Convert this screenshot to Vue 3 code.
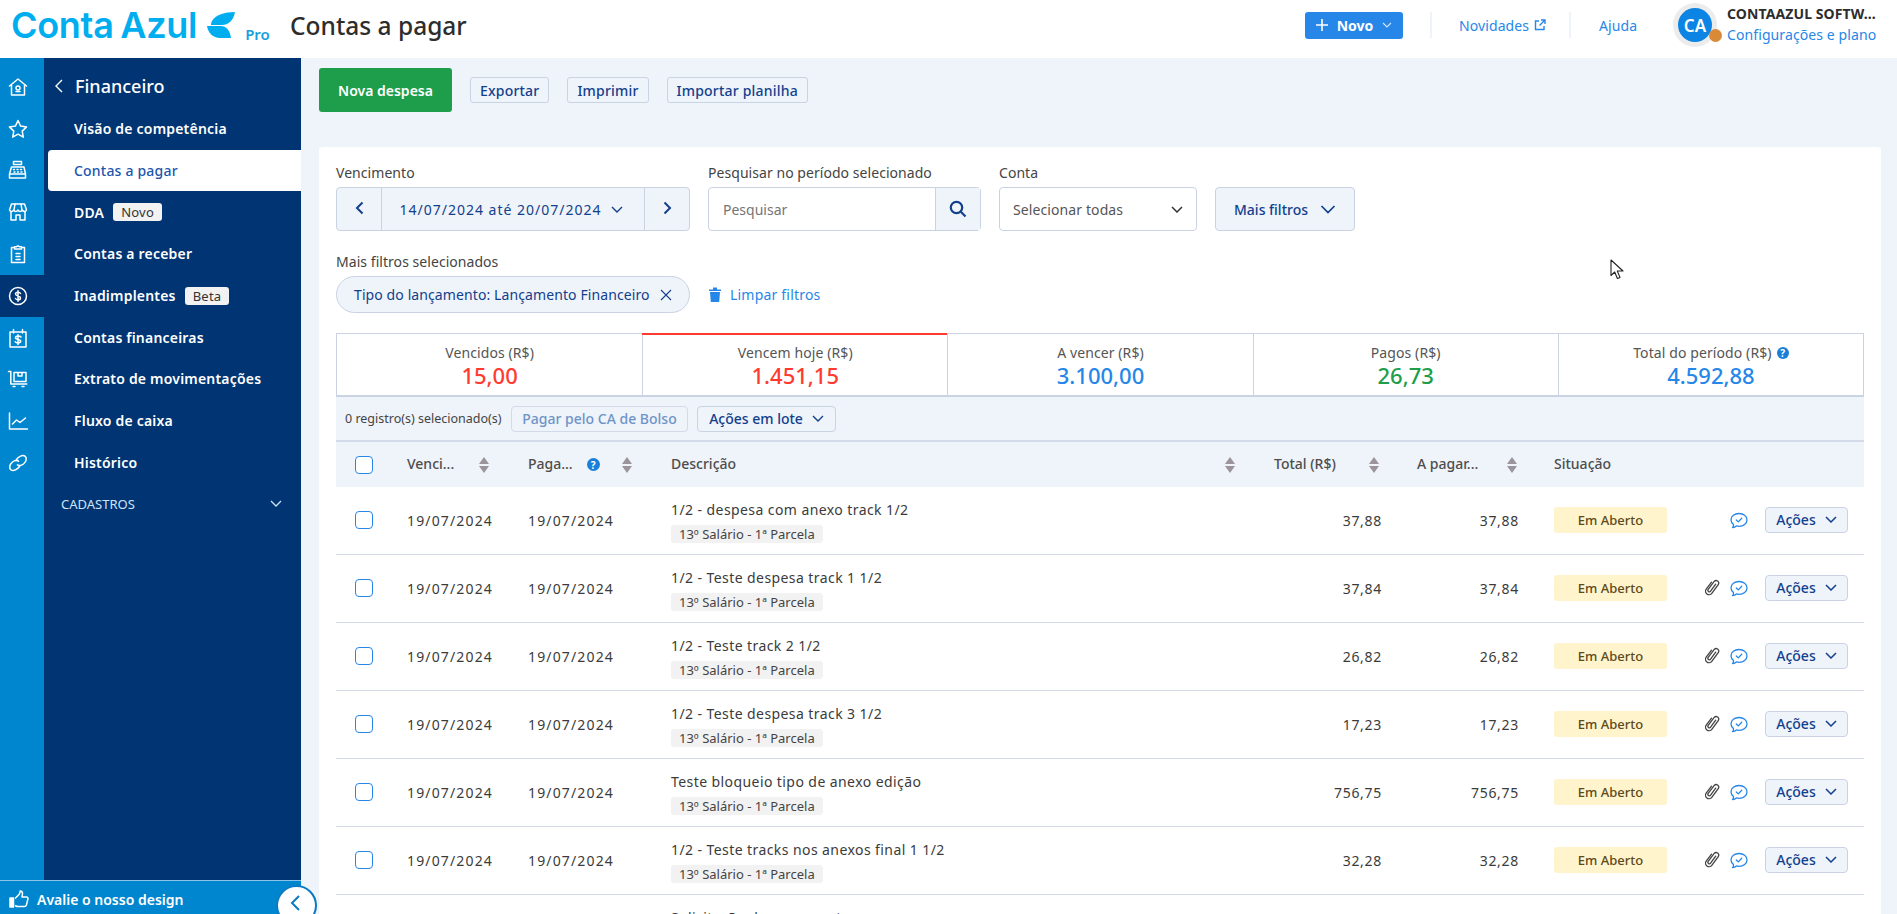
<script setup>
const navItems = [
  { label: 'Visão de competência' },
  { label: 'Contas a pagar', active: true },
  { label: 'DDA', badge: 'Novo' },
  { label: 'Contas a receber' },
  { label: 'Inadimplentes', badge: 'Beta' },
  { label: 'Contas financeiras' },
  { label: 'Extrato de movimentações' },
  { label: 'Fluxo de caixa' },
  { label: 'Histórico' }
]

const railIcons = ['home', 'star', 'register', 'store', 'clipboard', 'dollar', 'calendar', 'cart', 'chart', 'link']

const totals = [
  { label: 'Vencidos (R$)', value: '15,00', color: 'red' },
  { label: 'Vencem hoje (R$)', value: '1.451,15', color: 'red', current: true },
  { label: 'A vencer (R$)', value: '3.100,00', color: 'blue' },
  { label: 'Pagos (R$)', value: '26,73', color: 'green' },
  { label: 'Total do período (R$)', value: '4.592,88', color: 'blue', help: true }
]

const rows = [
  { title: '1/2 - despesa com anexo track 1/2', value: '37,88', noClip: true },
  { title: '1/2 - Teste despesa track 1 1/2', value: '37,84' },
  { title: '1/2 - Teste track 2 1/2', value: '26,82' },
  { title: '1/2 - Teste despesa track 3 1/2', value: '17,23' },
  { title: 'Teste bloqueio tipo de anexo edição', value: '756,75' },
  { title: '1/2 - Teste tracks nos anexos final 1 1/2', value: '32,28' },
  { title: 'Solicitação de pagamento', value: '120,00' }
]
</script>

<template>
  <div class="page">
    <header class="topbar">
      <div class="logo">
        <span class="logo-text">Conta Azul</span>
        <svg class="logo-mark" viewBox="0 0 30 26" width="30" height="26">
          <path d="M29 0C19 0 9 3 6 9c-1 2-1 3-1 4h11C23 13 28 7 29 0z" fill="#00aeef" />
          <path d="M1 14h14c5 0 9 4 10 12H14C7 26 2 21 1 14z" fill="#00aeef" />
        </svg>
        <span class="logo-pro">Pro</span>
      </div>
      <h1 class="page-title">Contas a pagar</h1>
      <div class="topbar-right">
        <button class="btn-new">
          <svg width="12" height="12" viewBox="0 0 12 12"><path d="M6 0v12M0 6h12" stroke="#fff" stroke-width="1.6" /></svg>
          <span>Novo</span>
          <svg width="10" height="6" viewBox="0 0 10 6"><path d="M1 1l4 4 4-4" fill="none" stroke="#cfe4fb" stroke-width="1.2" /></svg>
        </button>
        <a class="top-link news">
          Novidades
          <svg width="12" height="12" viewBox="0 0 12 12"><path d="M5 2H1.500v8.500H10V7M7 1h4v4M11 1L5.500 6.500" fill="none" stroke="#2687e9" stroke-width="1.400" /></svg>
        </a>
        <a class="top-link help">Ajuda</a>
        <div class="avatar">
          <div class="avatar-inner">CA</div>
          <span class="avatar-dot"></span>
        </div>
        <div class="account">
          <div class="account-name">CONTAAZUL SOFTW...</div>
          <div class="account-link">Configurações e plano</div>
        </div>
      </div>
    </header>

    <div class="body">
      <aside class="sidebar">
        <div class="sidebar-main">
          <nav class="rail">
            <div v-for="icon in railIcons" :key="icon" class="rail-item" :class="{ active: icon === 'dollar' }">
              <svg width="22" height="22" viewBox="0 0 22 22" fill="none" stroke="#fff" stroke-width="1.500" stroke-linejoin="round" stroke-linecap="round">
                <template v-if="icon === 'home'">
                  <path d="M2.500 10L11 3l8.500 7M4.500 9v10h13V9" />
                  <circle cx="11" cy="12" r="2" />
                  <path d="M9 15.500h4" />
                </template>
                <path v-else-if="icon === 'star'" d="M11 2.500l2.600 5.600 6 .8-4.400 4.200 1.100 6.100L11 16.200l-5.300 3 1.100-6.100-4.400-4.200 6-.8z" />
                <template v-else-if="icon === 'register'">
                  <path d="M6.500 2.500h8v3h-8zM4.500 8h12.500l1.500 7H2.500zM2.500 15h16v4h-16z" />
                  <path d="M6.500 10.500h1M10 10.500h1M13.500 10.500h1M7 13h1M10.500 13h1M14 13h1" />
                </template>
                <template v-else-if="icon === 'store'">
                  <path d="M4.500 3h13l2 6c-1 2-3 2-4.300 0-1 2-3.400 2-4.200 0-1 2-3.400 2-4.300 0-1 2-3.400 2-4.200 0z" />
                  <path d="M4 11v8h5v-5h4v5h5v-8M8 3L7 9M14 3l1 6" />
                </template>
                <template v-else-if="icon === 'clipboard'">
                  <path d="M7.500 4.500H4.500v15h13v-15h-3M7.500 6V3.800h2.200a1.400 1.400 0 0 1 2.600 0h2.200V6z" />
                  <path d="M9 10.500h4M9 13.500h4M9 16.500h4" />
                </template>
                <template v-else-if="icon === 'dollar'">
                  <circle cx="11" cy="11" r="8.500" />
                  <path d="M13.500 8.500c-.5-1-1.500-1.300-2.500-1.300-1.500 0-2.500.8-2.500 1.900 0 2.600 5 1.200 5 3.800 0 1.100-1 1.900-2.500 1.900-1.100 0-2-.4-2.500-1.300M11 5.800v10.400" />
                </template>
                <template v-else-if="icon === 'calendar'">
                  <path d="M3 5h16v15H3zM6.500 2.500V6M15.500 2.500V6" />
                  <path d="M14 10c-.5-.8-1.500-1.100-3-1.100-1.400 0-2.500.7-2.500 1.800 0 2.400 5.200 1 5.200 3.400 0 1.100-1.100 1.800-2.700 1.800-1.200 0-2.300-.4-2.800-1.200M11 7.800v9.700" />
                </template>
                <template v-else-if="icon === 'cart'">
                  <path d="M1.500 3.500h2.300v12.500h16" />
                  <path d="M7 4.500h12v9H7zM11 4.500v3.500h4V4.500" />
                  <path d="M6 18.500h2M15 18.500h2" />
                </template>
                <template v-else-if="icon === 'chart'">
                  <path d="M2.500 3v16h18" />
                  <path d="M5.500 14l4-4 3.500 2.500 5.500-4.500" />
                </template>
                <template v-else>
                  <path d="M9.500 7.500c2-3 6-5 8.500-3.300 2.300 1.700 1.300 5.600-1.500 7.800-2 1.600-4.500 2-6 .8" />
                  <path d="M12.500 14.500c-2 3-6 5-8.500 3.300-2.300-1.700-1.300-5.600 1.500-7.800 2-1.600 4.500-2 6-.8" />
                </template>
              </svg>
            </div>
          </nav>
          <div class="menu">
            <div class="menu-title">
              <svg width="8" height="14" viewBox="0 0 8 14"><path d="M7 1L1 7l6 6" fill="none" stroke="#fff" stroke-width="1.400" /></svg>
              <span>Financeiro</span>
            </div>
            <a v-for="item in navItems" :key="item.label" class="menu-item" :class="{ active: item.active }">
              {{ item.label }}
              <span v-if="item.badge" class="menu-badge">{{ item.badge }}</span>
            </a>
            <div class="menu-section">
              <span>CADASTROS</span>
              <svg width="12" height="7" viewBox="0 0 12 7"><path d="M1 1l5 5 5-5" fill="none" stroke="#cfe4fb" stroke-width="1.300" /></svg>
            </div>
          </div>
        </div>
        <div class="sidebar-footer">
          <svg width="20" height="18" viewBox="0 0 20 18" fill="none" stroke="#fff" stroke-width="1.500" stroke-linejoin="round">
            <path d="M1 8h3.500v9H1z" fill="#fff" />
            <path d="M6 8.500l4-4c1-1.200 1-2.500 1.200-3.500 1.800 0 2.600 1.500 2.200 3.500L13 7h4.500c1.200 0 1.700 1 1.400 2l-1.500 6c-.3 1-1 1.500-2 1.500H9c-1.300 0-2-.5-3-1" />
          </svg>
          <span>Avalie o nosso design</span>
        </div>
        <button class="collapse">
          <svg width="12" height="18" viewBox="0 0 12 18"><path d="M10 2L3 9l7 7" fill="none" stroke="#0a7ac4" stroke-width="2" /></svg>
        </button>
      </aside>

      <main class="content">
        <div class="actions">
          <button class="btn-primary">Nova despesa</button>
          <button class="btn-light">Exportar</button>
          <button class="btn-light">Imprimir</button>
          <button class="btn-light">Importar planilha</button>
        </div>

        <section class="card">
          <div class="filters">
            <div class="field">
              <label>Vencimento</label>
              <div class="date-range">
                <button class="date-arrow">
                  <svg width="9" height="14" viewBox="0 0 9 14"><path d="M7.500 1.500L2 7l5.500 5.500" fill="none" stroke="#12408c" stroke-width="2" /></svg>
                </button>
                <div class="date-value">
                  14/07/2024 até 20/07/2024
                  <svg width="12" height="7" viewBox="0 0 12 7"><path d="M1 1l5 5 5-5" fill="none" stroke="#12408c" stroke-width="1.400" /></svg>
                </div>
                <button class="date-arrow">
                  <svg width="9" height="14" viewBox="0 0 9 14"><path d="M1.500 1.500L7 7l-5.500 5.500" fill="none" stroke="#12408c" stroke-width="2" /></svg>
                </button>
              </div>
            </div>
            <div class="field">
              <label>Pesquisar no período selecionado</label>
              <div class="search">
                <span class="search-text">Pesquisar</span>
                <button class="search-btn">
                  <svg width="18" height="18" viewBox="0 0 18 18" fill="none" stroke="#12408c" stroke-width="2.200"><circle cx="7.500" cy="7.500" r="5.700" /><path d="M11.800 11.800L16.500 16.500" /></svg>
                </button>
              </div>
            </div>
            <div class="field">
              <label>Conta</label>
              <div class="select">
                <span>Selecionar todas</span>
                <svg width="12" height="7" viewBox="0 0 12 7"><path d="M1 1l5 5 5-5" fill="none" stroke="#333" stroke-width="1.500" /></svg>
              </div>
            </div>
            <button class="btn-more">
              Mais filtros
              <svg width="16" height="9" viewBox="0 0 16 9"><path d="M1.500 1l6.500 6.500L14.500 1" fill="none" stroke="#12408c" stroke-width="1.700" /></svg>
            </button>
          </div>

          <div class="selected-filters">
            <label>Mais filtros selecionados</label>
            <div class="chip-line">
              <div class="chip">
                <span>Tipo do lançamento: Lançamento Financeiro</span>
                <svg width="12" height="12" viewBox="0 0 12 12"><path d="M1 1l10 10M11 1L1 11" stroke="#12408c" stroke-width="1.100" /></svg>
              </div>
              <a class="clear">
                <svg width="12" height="15" viewBox="0 0 12 15"><path d="M0 2.500h12v1.500H0zM4 .5h4v2H4zM1 5h10l-.8 10H1.800z" fill="#2687e9" /></svg>
                Limpar filtros
              </a>
            </div>
          </div>

          <div class="totals">
            <div v-for="t in totals" :key="t.label" class="total" :class="{ current: t.current }">
              <div class="total-label">
                {{ t.label }}
                <span v-if="t.help" class="help-dot">?</span>
              </div>
              <div class="total-value" :class="t.color">{{ t.value }}</div>
            </div>
          </div>

          <div class="bulk">
            <span class="bulk-count">0 registro(s) selecionado(s)</span>
            <button class="btn-disabled">Pagar pelo CA de Bolso</button>
            <button class="btn-bulk">
              Ações em lote
              <svg width="12" height="7" viewBox="0 0 12 7"><path d="M1 1l5 5 5-5" fill="none" stroke="#12408c" stroke-width="1.400" /></svg>
            </button>
          </div>

          <div class="table">
            <div class="tr thead">
              <div class="td td-check"><span class="checkbox"></span></div>
              <div class="td th">
                <span class="th-text venc">Venci...</span>
                <span class="sort"></span>
              </div>
              <div class="td th">
                <span class="th-text pag">Paga...</span>
                <span class="help-dot big">?</span>
                <span class="sort"></span>
              </div>
              <div class="td th desc">
                <span class="th-text">Descrição</span>
                <span class="sort"></span>
              </div>
              <div class="td th num-total">
                <span class="th-text">Total (R$)</span>
                <span class="sort"></span>
              </div>
              <div class="td th num-pay">
                <span class="th-text">A pagar...</span>
                <span class="sort"></span>
              </div>
              <div class="td th status"><span class="th-text">Situação</span></div>
              <div class="td"></div>
            </div>
            <div v-for="row in rows" :key="row.title" class="tr body-row">
              <div class="td td-check"><span class="checkbox"></span></div>
              <div class="td date">19/07/2024</div>
              <div class="td date">19/07/2024</div>
              <div class="td info">
                <div class="row-title">{{ row.title }}</div>
                <span class="row-tag">13º Salário - 1ª Parcela</span>
              </div>
              <div class="td amount">{{ row.value }}</div>
              <div class="td amount pay">{{ row.value }}</div>
              <div class="td status"><span class="badge-open">Em Aberto</span></div>
              <div class="td row-actions">
                <svg v-if="!row.noClip" class="clip" width="15" height="17" viewBox="0 0 15 17" fill="none" stroke="#444" stroke-width="1.300" stroke-linecap="round">
                  <path d="M10.700 5.200L5.600 12.200a1.500 1.500 0 0 1-2.400-1.800L9.200 2.400a2.600 2.600 0 0 1 4.200 3L6.800 14.300a3.500 3.500 0 0 1-5.600-4.200L6.500 3.200" />
                </svg>
                <svg width="18" height="18" viewBox="0 0 18 18" fill="none" stroke="#2687e9" stroke-width="1.300" stroke-linecap="round" stroke-linejoin="round">
                  <path d="M3.500 13.500C2 12.300 1 10.700 1 8.900 1 5.300 4.600 2.500 9 2.500s8 2.800 8 6.400-3.600 6.400-8 6.400c-1 0-1.800-.1-2.600-.4-1 1.200-2.400 1.700-3.900 1.800.7-.7 1-1.900 1-3.200z" />
                  <path d="M6.300 9l2 1.900 3.400-3.600" />
                </svg>
                <button class="btn-actions">
                  Ações
                  <svg width="12" height="7" viewBox="0 0 12 7"><path d="M1 1l5 5 5-5" fill="none" stroke="#12408c" stroke-width="1.500" /></svg>
                </button>
              </div>
            </div>
          </div>
        </section>
      </main>
    </div>

    <svg class="cursor" width="14" height="21" viewBox="0 0 14 21">
      <path d="M1 1v15.500l3.700-3.500 2.700 6.500 2.600-1.100-2.700-6.400H13z" fill="#fff" stroke="#222" stroke-width="1.100" stroke-linejoin="round" />
    </svg>
  </div>
</template>

<style scoped>
.page {
  position: relative;
  width: 100%;
  height: 100vh;
  overflow: hidden;
  display: flex;
  flex-direction: column;
  font-family: "Noto Sans", "Open Sans", sans-serif;
  color: #3b3b3b;
  background: #eff3fa;
}

/* Topbar */
.topbar {
  height: 58px;
  flex-shrink: 0;
  box-sizing: border-box;
  padding-bottom: 8px;
  display: flex;
  align-items: center;
  background: #fff;
}

.logo {
  display: flex;
  align-items: center;
  width: 290px;
  padding-left: 11px;
  box-sizing: border-box;
  flex-shrink: 0;
}

.logo-text {
  font-family: Inter, sans-serif;
  font-size: 36px;
  font-weight: 600;
  letter-spacing: -.3px;
  word-spacing: -2px;
  color: #00aeef;
  line-height: 1;
  white-space: nowrap;
}

.logo-mark {
  margin-left: 9px;
}

.logo-pro {
  margin-left: 9px;
  margin-top: 18px;
  font-size: 15px;
  font-weight: 600;
  color: #1a9fe0;
}

.page-title {
  margin: 0;
  font-size: 24.500px;
  font-weight: 500;
  color: #2d2d2d;
}

.topbar-right {
  margin-left: auto;
  display: flex;
  align-items: center;
}

.btn-new {
  width: 98px;
  height: 27px;
  display: flex;
  align-items: center;
  justify-content: center;
  gap: 9px;
  margin-right: 27px;
  border: none;
  border-radius: 3px;
  background: #2687e9;
  color: #fff;
  font-family: inherit;
  font-size: 14px;
  font-weight: 700;
}

.top-link {
  display: flex;
  align-items: center;
  height: 26px;
  gap: 5px;
  font-size: 14px;
  letter-spacing: .1px;
  color: #2687e9;
}

.news {
  width: 141px;
  box-sizing: border-box;
  padding-left: 27px;
  border-left: 2px solid #eff3fa;
  border-right: 2px solid #eff3fa;
}

.help {
  width: 100px;
  padding-left: 28px;
  box-sizing: border-box;
}

.avatar {
  position: relative;
  width: 44px;
  height: 44px;
  margin-left: 2px;
  border-radius: 50%;
  background: #ececec;
  display: flex;
  align-items: center;
  justify-content: center;
  flex-shrink: 0;
}

.avatar-inner {
  width: 34px;
  height: 34px;
  border-radius: 50%;
  background: #0b84e3;
  color: #fff;
  display: flex;
  align-items: center;
  justify-content: center;
  font-size: 17px;
  font-weight: 600;
}

.avatar-dot {
  position: absolute;
  right: -5px;
  top: 26px;
  width: 13px;
  height: 13px;
  border-radius: 50%;
  background: #d98a37;
}

.account {
  width: 180px;
  padding-left: 10px;
  box-sizing: border-box;
}

.account-name {
  font-size: 14px;
  font-weight: 700;
  letter-spacing: .1px;
  color: #2d2d2d;
  white-space: nowrap;
  line-height: 18px;
}

.account-link {
  font-size: 14px;
  letter-spacing: .1px;
  color: #2687e9;
  white-space: nowrap;
  line-height: 20px;
  margin-top: 2px;
}

/* Sidebar */
.body {
  flex: 1;
  display: flex;
  min-height: 0;
}

.sidebar {
  position: relative;
  width: 301px;
  flex-shrink: 0;
  display: flex;
  flex-direction: column;
  background: #003473;
}

.sidebar-main {
  flex: 1;
  display: flex;
  min-height: 0;
}

.rail {
  width: 44px;
  flex-shrink: 0;
  padding-top: 8px;
  background: #0085cf;
}

.rail-item {
  height: 41.800px;
  display: flex;
  align-items: center;
  justify-content: center;
  padding-right: 8px;
  box-sizing: border-box;
}

.rail-item.active {
  background: #003473;
}

.menu {
  flex: 1;
  padding-top: 6px;
  color: #fff;
}

.menu-title {
  height: 44px;
  display: flex;
  align-items: center;
  gap: 12px;
  padding-left: 11px;
  font-size: 18px;
  font-weight: 500;
}

.menu-item {
  height: 41.700px;
  display: flex;
  align-items: center;
  gap: 9px;
  margin-left: 4px;
  padding-left: 26px;
  font-size: 14px;
  font-weight: 600;
  letter-spacing: .2px;
  color: #fff;
  border-radius: 4px 0 0 4px;
}

.menu-item.active {
  background: #fff;
  color: #1c55ad;
  font-weight: 500;
}

.menu-badge {
  padding: 0 8px;
  height: 18px;
  line-height: 18px;
  border-radius: 3px;
  background: #f2f2f2;
  color: #333;
  font-size: 13px;
  font-weight: 400;
}

.menu-section {
  height: 41px;
  display: flex;
  align-items: center;
  justify-content: space-between;
  padding: 0 19px 0 17px;
  font-size: 13px;
  color: #cfe4fb;
}

.sidebar-footer {
  height: 34px;
  flex-shrink: 0;
  box-sizing: border-box;
  display: flex;
  align-items: center;
  gap: 8px;
  padding: 3px 0 0 9px;
  border-top: 1px solid #8cc4e8;
  background: #0085cf;
  color: #fff;
  font-size: 14px;
  font-weight: 600;
}

.collapse {
  position: absolute;
  left: 276px;
  bottom: -12px;
  width: 41px;
  height: 41px;
  border: 2px solid #0a7ac4;
  border-radius: 50%;
  background: #fff;
  display: flex;
  align-items: center;
  justify-content: center;
  padding: 0 4px 6px 0;
}

/* Content */
.content {
  flex: 1;
  min-width: 0;
  padding: 10px 16px 0 18px;
}

.actions {
  display: flex;
  align-items: center;
  height: 44px;
  gap: 18px;
}

.btn-primary {
  width: 133px;
  height: 44px;
  border: none;
  border-radius: 3px;
  background: #1e9e4a;
  color: #fff;
  font-family: inherit;
  font-size: 14px;
  font-weight: 600;
}

.btn-light {
  height: 26px;
  padding: 0 9px;
  border: 1px solid #c9d3e3;
  border-radius: 3px;
  background: #eff3fa;
  color: #12408c;
  font-family: inherit;
  font-size: 14px;
  font-weight: 500;
  letter-spacing: .2px;
}

.card {
  margin-top: 35px;
  padding: 18px 17px 0;
  height: 900px;
  box-sizing: border-box;
  background: #fff;
  border-radius: 4px;
}

label {
  display: block;
  font-size: 14px;
  line-height: 16px;
  letter-spacing: .05px;
  color: #444;
}

.filters {
  display: flex;
  align-items: flex-end;
  gap: 18px;
}

.field label {
  margin-bottom: 6px;
}

.date-range {
  width: 354px;
  height: 44px;
  box-sizing: border-box;
  display: flex;
  border: 1px solid #c9d3e3;
  border-radius: 4px;
  background: #eff3fa;
}

.date-arrow {
  width: 44px;
  flex-shrink: 0;
  border: none;
  background: none;
  padding: 0;
}

.date-value {
  flex: 1;
  display: flex;
  align-items: center;
  justify-content: center;
  gap: 9px;
  padding-right: 4px;
  border-left: 1px solid #c9d3e3;
  border-right: 1px solid #c9d3e3;
  color: #12408c;
  font-size: 14px;
  letter-spacing: 1px;
  white-space: nowrap;
}

.search {
  width: 273px;
  height: 44px;
  box-sizing: border-box;
  display: flex;
  align-items: center;
  justify-content: space-between;
  border: 1px solid #c9d3e3;
  border-radius: 4px;
}

.search-text {
  padding-left: 14px;
  font-size: 14px;
  color: #757575;
}

.search-btn {
  width: 45px;
  height: 100%;
  border: none;
  border-left: 1px solid #c9d3e3;
  background: #eff3fa;
  padding: 0;
  display: flex;
  align-items: center;
  justify-content: center;
}

.select {
  width: 198px;
  height: 44px;
  box-sizing: border-box;
  display: flex;
  align-items: center;
  justify-content: space-between;
  padding: 0 13px;
  border: 1px solid #c9d3e3;
  border-radius: 4px;
  font-size: 14px;
  letter-spacing: .1px;
  color: #555;
}

.btn-more {
  width: 140px;
  height: 44px;
  display: flex;
  align-items: center;
  justify-content: center;
  gap: 12px;
  border: 1px solid #c9d3e3;
  border-radius: 4px;
  background: #eff3fa;
  color: #12408c;
  font-family: inherit;
  font-size: 14px;
  font-weight: 500;
  padding: 0;
}

.selected-filters {
  margin-top: 23px;
}

.selected-filters label {
  margin-bottom: 6px;
}

.chip-line {
  display: flex;
  align-items: center;
  gap: 19px;
}

.chip {
  width: 354px;
  height: 37px;
  box-sizing: border-box;
  display: flex;
  align-items: center;
  justify-content: space-between;
  padding: 0 17px;
  border: 1px solid #c9d3e3;
  border-radius: 19px;
  background: #eff3fa;
  color: #12408c;
  font-size: 14px;
  letter-spacing: .1px;
  white-space: nowrap;
}

.clear {
  display: flex;
  align-items: center;
  gap: 9px;
  font-size: 14px;
  letter-spacing: .2px;
  color: #2687e9;
}

.totals {
  margin-top: 20px;
  height: 64px;
  box-sizing: border-box;
  display: grid;
  grid-template-columns: repeat(5, 1fr);
  border: 1px solid #c9d3e3;
  border-bottom-width: 2px;
}

.total {
  position: relative;
  display: flex;
  flex-direction: column;
  align-items: center;
  padding-top: 11px;
  border-left: 1px solid #c9d3e3;
}

.total:first-child {
  border-left: none;
}

.total.current::before {
  content: "";
  position: absolute;
  left: -1px;
  right: 0;
  top: -1px;
  height: 2px;
  background: #ff3b30;
}

.total-label {
  display: flex;
  align-items: center;
  gap: 5px;
  font-size: 14px;
  letter-spacing: .1px;
  line-height: 16px;
  color: #555;
}

.total-value {
  font-size: 22px;
  font-weight: 500;
  line-height: 26px;
  margin-top: 1px;
}

.total-value.red { color: #ff3b30; }
.total-value.blue { color: #2687e9; }
.total-value.green { color: #1e9e4a; }

.help-dot {
  width: 12px;
  height: 12px;
  border-radius: 50%;
  background: #1a7fd8;
  color: #fff;
  display: inline-flex;
  align-items: center;
  justify-content: center;
  font-size: 10px;
  font-weight: 700;
  line-height: 1;
}

.help-dot.big {
  width: 13px;
  height: 13px;
  margin-left: 14px;
}

.bulk {
  height: 45px;
  box-sizing: border-box;
  display: flex;
  align-items: center;
  padding-left: 9px;
  background: #eff3fa;
  border-bottom: 2px solid #d3dbe8;
}

.bulk-count {
  width: 166px;
  font-size: 12.500px;
  color: #444;
  white-space: nowrap;
}

.btn-disabled {
  width: 177px;
  height: 26px;
  padding: 0;
  border: 1px solid #d3dbe8;
  border-radius: 4px;
  background: #eff3fa;
  color: #6e93c7;
  font-family: inherit;
  font-size: 14px;
  font-weight: 500;
}

.btn-bulk {
  width: 139px;
  height: 26px;
  margin-left: 9px;
  padding: 0;
  display: flex;
  align-items: center;
  justify-content: center;
  gap: 9px;
  border: 1px solid #c9d3e3;
  border-radius: 4px;
  background: #eff3fa;
  color: #12408c;
  font-family: inherit;
  font-size: 14px;
  font-weight: 500;
}

/* Table */
.tr {
  display: grid;
  grid-template-columns: 71px 121px 143px 589px 136px 137px 135px 1fr;
  height: 68px;
  box-sizing: border-box;
  border-bottom: 1px solid #d3dbe8;
}

.body-row {
  padding-bottom: 2px;
}

.thead {
  height: 45px;
  border-bottom: none;
  background: #eff3fa;
}

.td {
  display: flex;
  align-items: center;
  min-width: 0;
}

.td-check {
  padding-left: 19px;
}

.checkbox {
  width: 18px;
  height: 18px;
  box-sizing: border-box;
  border: 1px solid #2687e9;
  border-radius: 4px;
  background: #fff;
}

.th {
  font-size: 14px;
  font-weight: 500;
  color: #4d4d4d;
  white-space: nowrap;
}

.th-text {
  margin-bottom: 2px;
}

.th-text.venc {
  width: 72px;
}

.sort {
  position: relative;
  width: 10px;
  height: 16px;
  flex-shrink: 0;
}

.sort::before,
.sort::after {
  content: "";
  position: absolute;
  left: 0;
  border-left: 5px solid transparent;
  border-right: 5px solid transparent;
}

.sort::before {
  top: 0;
  border-bottom: 7px solid #9b949b;
}

.sort::after {
  bottom: 0;
  border-top: 7px solid #9b949b;
}

.th .pag + .help-dot + .sort {
  margin-left: 22px;
}

.desc {
  justify-content: space-between;
  padding-right: 25px;
}

.num-total {
  padding-left: 14px;
  gap: 33px;
}

.num-pay {
  padding-left: 21px;
  gap: 29px;
}

.status {
  padding-left: 21px;
}

.date {
  font-size: 14px;
  letter-spacing: 1.150px;
  color: #3b3b3b;
  padding-top: 2px;
}

.info {
  flex-direction: column;
  align-items: flex-start;
  padding-top: 13px;
}

.row-title {
  font-size: 14px;
  line-height: 20px;
  letter-spacing: .42px;
  color: #3b3b3b;
  white-space: nowrap;
}

.row-tag {
  margin-top: 5px;
  height: 18px;
  line-height: 18px;
  padding: 0 8px;
  border-radius: 3px;
  background: #f2f2f2;
  font-size: 13px;
  color: #444;
  white-space: nowrap;
}

.amount {
  justify-content: flex-end;
  padding-right: 14px;
  padding-top: 2px;
  font-size: 14px;
  letter-spacing: .7px;
  color: #3b3b3b;
}

.badge-open {
  width: 113px;
  height: 26px;
  line-height: 26px;
  text-align: center;
  border-radius: 3px;
  background: #fff4cc;
  color: #5c4a1a;
  font-size: 13px;
  font-weight: 500;
}

.row-actions {
  justify-content: flex-end;
  padding-right: 16px;
  gap: 7px;
}

.clip {
  margin-right: 3px;
}

.btn-actions {
  width: 83px;
  height: 26px;
  margin-left: 10px;
  padding: 0;
  display: flex;
  align-items: center;
  justify-content: center;
  gap: 9px;
  border: 1px solid #c9d3e3;
  border-radius: 4px;
  background: #eff3fa;
  color: #12408c;
  font-family: inherit;
  font-size: 14px;
  font-weight: 500;
}

.cursor {
  position: absolute;
  left: 1610px;
  top: 259px;
}
</style>

<style>
body {
  overflow: hidden;
}
</style>
